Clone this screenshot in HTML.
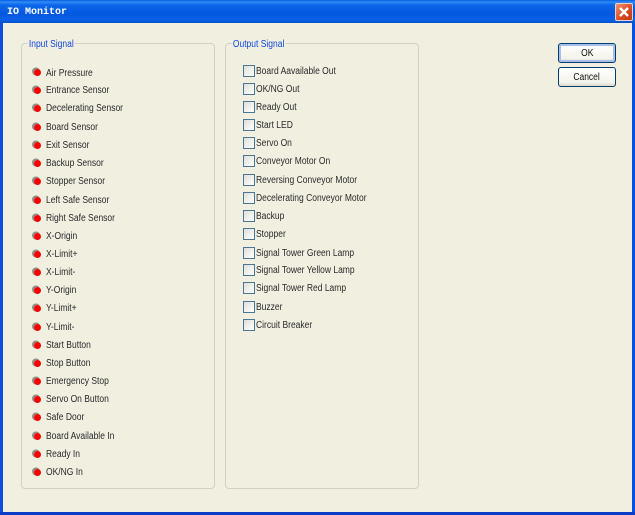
<!DOCTYPE html>
<html><head><meta charset="utf-8"><style>
html,body{margin:0;padding:0}
#w{position:relative;width:635px;height:515px;overflow:hidden;background:#f1efe0;font-family:"Liberation Sans",sans-serif;font-size:10px;color:#2a2a2a}
#tb{position:absolute;left:0;top:0;width:635px;height:23px;background:linear-gradient(#0a5be0 0,#2f8cf8 2px,#0d66ea 5px,#0458df 14px,#0a62e8 20px,#0450c8 23px)}
#tb b{position:absolute;left:7px;top:7px;font:bold 10px/11px "Liberation Mono",monospace;color:#fff;white-space:pre}
#l{position:absolute;left:0;top:23px;width:3px;height:492px;background:#0a50e0}
#r{position:absolute;right:0;top:23px;width:3px;height:492px;background:#0a50e0}
#bt{position:absolute;left:0;top:512px;width:635px;height:3px;background:#0a3cc8}
#x{position:absolute;left:615px;top:3px;width:16px;height:16px;border:1px solid #f0d0c0;border-radius:2px;background:linear-gradient(135deg,#f09070,#d84a22 60%,#c03810)}
.g{position:absolute;border:1px solid #d4d2be;border-radius:4px;box-sizing:border-box}
.gl{position:absolute;background:#f1efe0;color:#1048e0;padding:0 1px;white-space:nowrap;transform:scaleX(.85);transform-origin:left center}
.t{position:absolute;white-space:nowrap;line-height:12px;margin-top:2px;transform:scaleX(.85);transform-origin:left center}
.d{position:absolute;width:7px;height:7px;border-radius:50%;background:radial-gradient(circle at 50% 45%,#f00 55%,#e00010 70%);box-shadow:-1.5px -1px 0 .5px #8f8f88}
.c{position:absolute;left:243px;width:10px;height:10px;border:1px solid #4a7696;background:linear-gradient(135deg,#dfdfd8,#fff)}
.btn{position:absolute;left:558px;width:58px;height:20px;box-sizing:border-box;border:1px solid #003c74;border-radius:3px;background:linear-gradient(#fff,#f4f3ec 80%,#dcd8ca);text-align:center;line-height:20px;color:#111}
.btn span{display:inline-block;transform:scaleX(.85)}
</style></head><body><div id="w">
<div id="tb"><b>IO Monitor</b></div>
<div id="l"></div><div id="r"></div><div id="bt"></div>
<svg id="x" viewBox="0 0 16 16"><path d="M4 4L12 12M12 4L4 12" stroke="#fff" stroke-width="2.4" fill="none"/></svg>
<div class="g" style="left:21px;top:43px;width:194px;height:446px"></div>
<div class="gl" style="left:28px;top:39px">Input Signal</div>
<div class="g" style="left:225px;top:43px;width:194px;height:446px"></div>
<div class="gl" style="left:232px;top:39px">Output Signal</div>

<div class="d" style="left:34px;top:69px"></div><div class="t" style="left:46px;top:66px">Air Pressure</div>
<div class="d" style="left:34px;top:87px"></div><div class="t" style="left:46px;top:83px">Entrance Sensor</div>
<div class="d" style="left:34px;top:105px"></div><div class="t" style="left:46px;top:101px">Decelerating Sensor</div>
<div class="d" style="left:34px;top:124px"></div><div class="t" style="left:46px;top:120px">Board Sensor</div>
<div class="d" style="left:34px;top:142px"></div><div class="t" style="left:46px;top:138px">Exit Sensor</div>
<div class="d" style="left:34px;top:160px"></div><div class="t" style="left:46px;top:156px">Backup Sensor</div>
<div class="d" style="left:34px;top:178px"></div><div class="t" style="left:46px;top:174px">Stopper Sensor</div>
<div class="d" style="left:34px;top:197px"></div><div class="t" style="left:46px;top:193px">Left Safe Sensor</div>
<div class="d" style="left:34px;top:215px"></div><div class="t" style="left:46px;top:211px">Right Safe Sensor</div>
<div class="d" style="left:34px;top:233px"></div><div class="t" style="left:46px;top:229px">X-Origin</div>
<div class="d" style="left:34px;top:251px"></div><div class="t" style="left:46px;top:247px">X-Limit+</div>
<div class="d" style="left:34px;top:269px"></div><div class="t" style="left:46px;top:265px">X-Limit-</div>
<div class="d" style="left:34px;top:287px"></div><div class="t" style="left:46px;top:283px">Y-Origin</div>
<div class="d" style="left:34px;top:305px"></div><div class="t" style="left:46px;top:301px">Y-Limit+</div>
<div class="d" style="left:34px;top:324px"></div><div class="t" style="left:46px;top:320px">Y-Limit-</div>
<div class="d" style="left:34px;top:342px"></div><div class="t" style="left:46px;top:338px">Start Button</div>
<div class="d" style="left:34px;top:360px"></div><div class="t" style="left:46px;top:356px">Stop Button</div>
<div class="d" style="left:34px;top:378px"></div><div class="t" style="left:46px;top:374px">Emergency Stop</div>
<div class="d" style="left:34px;top:396px"></div><div class="t" style="left:46px;top:392px">Servo On Button</div>
<div class="d" style="left:34px;top:414px"></div><div class="t" style="left:46px;top:410px">Safe Door</div>
<div class="d" style="left:34px;top:433px"></div><div class="t" style="left:46px;top:429px">Board Available In</div>
<div class="d" style="left:34px;top:451px"></div><div class="t" style="left:46px;top:447px">Ready In</div>
<div class="d" style="left:34px;top:469px"></div><div class="t" style="left:46px;top:465px">OK/NG In</div>

<div class="c" style="top:65px"></div><div class="t" style="left:256px;top:64px">Board Aavailable Out</div>
<div class="c" style="top:83px"></div><div class="t" style="left:256px;top:82px">OK/NG Out</div>
<div class="c" style="top:101px"></div><div class="t" style="left:256px;top:100px">Ready Out</div>
<div class="c" style="top:119px"></div><div class="t" style="left:256px;top:118px">Start LED</div>
<div class="c" style="top:137px"></div><div class="t" style="left:256px;top:136px">Servo On</div>
<div class="c" style="top:155px"></div><div class="t" style="left:256px;top:154px">Conveyor Motor On</div>
<div class="c" style="top:174px"></div><div class="t" style="left:256px;top:173px">Reversing Conveyor Motor</div>
<div class="c" style="top:192px"></div><div class="t" style="left:256px;top:191px">Decelerating Conveyor Motor</div>
<div class="c" style="top:210px"></div><div class="t" style="left:256px;top:209px">Backup</div>
<div class="c" style="top:228px"></div><div class="t" style="left:256px;top:227px">Stopper</div>
<div class="c" style="top:247px"></div><div class="t" style="left:256px;top:246px">Signal Tower Green Lamp</div>
<div class="c" style="top:264px"></div><div class="t" style="left:256px;top:263px">Signal Tower Yellow Lamp</div>
<div class="c" style="top:282px"></div><div class="t" style="left:256px;top:281px">Signal Tower Red Lamp</div>
<div class="c" style="top:301px"></div><div class="t" style="left:256px;top:300px">Buzzer</div>
<div class="c" style="top:319px"></div><div class="t" style="left:256px;top:318px">Circuit Breaker</div>

<div class="btn" style="top:43px;box-shadow:inset 0 0 0 2px #a8c0e8"><span>OK</span></div>
<div class="btn" style="top:67px"><span>Cancel</span></div>
</div></body></html>
